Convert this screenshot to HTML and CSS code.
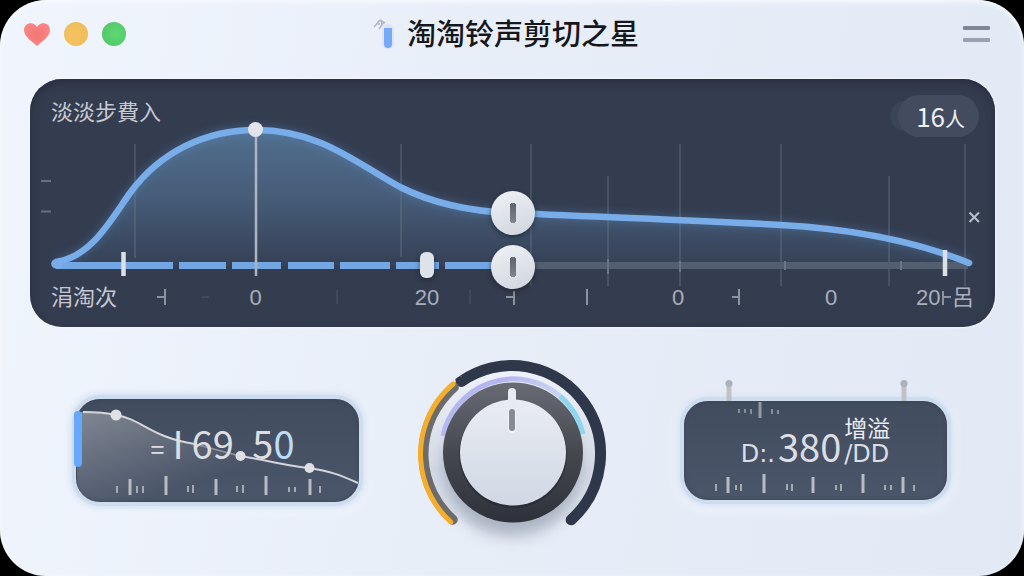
FILE: index.html
```html
<!DOCTYPE html>
<html lang="zh-CN">
<head>
    <meta charset="UTF-8">
    <meta name="viewport" content="width=device-width, initial-scale=1.0">
    <title>淘淘铃声剪切之星</title>
    <link rel="stylesheet" href="styles.css">
</head>
<body>
<div class="window">
    <header class="titlebar">
        <div class="lights">
            <button type="button" class="light" aria-label="关闭">
                <svg class="heart" viewBox="0 0 26 23">
                    <defs>
                        <radialGradient id="heartFill">
                            <stop offset="0" stop-color="#f27575"/>
                            <stop offset="1" stop-color="#fa8583"/>
                        </radialGradient>
                    </defs>
                    <path d="M13 23 C9 19 0 14 0 7 C0 -1 10 -2 13 4 C16 -2 26 -1 26 7 C26 14 17 19 13 23 Z" fill="url(#heartFill)"/>
                </svg>
            </button>
            <button type="button" class="light dot yellow" aria-label="最小化"></button>
            <button type="button" class="light dot green" aria-label="最大化"></button>
        </div>
        <div class="brand">
            <svg class="brand-icon" viewBox="0 0 22 32">
                <path d="M1 9 L7 2 L12 5 M3 6 L7 6 M6 11 L11 4 M8 2 L9 8" fill="none" stroke="#b4b8c2" stroke-width="1.5"/>
                <rect x="9" y="6" width="12" height="25" rx="5" fill="#dfe6f2"/>
                <path d="M11 10 H19 V26 A4 4 0 0 1 11 26 Z" fill="#78a9f7"/>
            </svg>
            <h1>淘淘铃声剪切之星</h1>
        </div>
        <button type="button" class="menu" aria-label="菜单"><span></span><span></span></button>
    </header>

    <main>
        <section class="panel">
            <svg class="chart" viewBox="30 79 965 248">
                <defs>
                    <linearGradient id="area" gradientUnits="userSpaceOnUse" x1="0" y1="130" x2="0" y2="266">
                        <stop offset="0" stop-color="#6fa3cf" stop-opacity=".5"/>
                        <stop offset=".5" stop-color="#6a9ac8" stop-opacity=".34"/>
                        <stop offset="1" stop-color="#6098cc" stop-opacity=".05"/>
                    </linearGradient>
                    <filter id="glow" x="-5%" y="-20%" width="110%" height="140%">
                        <feGaussianBlur stdDeviation="5"/>
                    </filter>
                </defs>

                <path d="M56 262 C92 257 112 218 130 193 C160 152 205 130 256 130 C320 130 356 163 400 187 C440 207 480 212 513 213 C620 218 690 220 781 225 C870 230 930 247 969 263 L969 266 L56 266 Z" fill="url(#area)"/>

                <!-- Raster -->
                <g stroke="#6c7788" stroke-opacity=".5" stroke-width="1.5">
                    <path d="M135 144 V258 M401 144 V257 M531 144 V286 M608 176 V286 M680 144 V286 M781 144 V286 M889 176 V286 M965 144 V286"/>
                    <path d="M41 181 H51 M41 211.500 H51" stroke-opacity=".9" stroke-width="2"/>
                </g>

                <path d="M56 262 C92 257 112 218 130 193 C160 152 205 130 256 130 C320 130 356 163 400 187 C440 207 480 212 513 213 C620 218 690 220 781 225 C870 230 930 247 969 263" fill="none" stroke="#5b97de" stroke-opacity=".35" stroke-width="7" filter="url(#glow)"/>

                <!-- Spur -->
                <path d="M513 265.500 H968" stroke="#535f70" stroke-width="7"/>
                <path d="M608 259 V274 M680 261 V272 M785 261 V270 M901 261 V270" stroke="#6a7685" stroke-width="2"/>
                <path d="M56 265.500 H173 M179 265.500 H226 M232 265.500 H281 M288 265.500 H334 M340 265.500 H390 M396 265.500 H439 M445 265.500 H513" stroke="#72a7e4" stroke-width="7"/>

                <path d="M60 265.500 H57 C53 265 54 262 58 261.500 C92 256 112 218 130 193 C160 152 205 130 256 130 C320 130 356 163 400 187 C440 207 480 212 513 213 C620 218 690 220 781 225 C870 230 930 247 969 263" fill="none" stroke="#78ade9" stroke-width="6.500" stroke-linecap="round" stroke-linejoin="round"/>

                <path d="M256 130 V276" stroke="#aeb5c1" stroke-width="2.500"/>
                <circle cx="255.500" cy="129.500" r="7.500" fill="#e2e4e9"/>
                <path d="M123.500 252 V276 M945 250 V276" stroke="#dcdfe6" stroke-width="4.500"/>

                <!-- Skala -->
                <g class="scale">
                    <text x="255.500" y="305" text-anchor="middle">0</text>
                    <text x="427" y="305" text-anchor="middle">20</text>
                    <text x="678" y="305" text-anchor="middle">0</text>
                    <text x="831" y="305" text-anchor="middle">0</text>
                    <text x="916" y="305">20</text>
                    <text class="cjk" x="952" y="305">呂</text>
                    <text class="cjk start" x="51" y="305">涓淘次</text>
                    <path d="M165 289 V305 M157 297 H165 M514 291 V305 M506 297 H514 M587 289 V305 M739 289 V305 M732 297 H739 M943 291 V305 M943 297 H951"/>
                    <path d="M202 297 H209 M337 290 V304 M470 290 V304" opacity=".15"/>
                </g>
                <path d="M969.500 212.500 L979 222 M979 212.500 L969.500 222" stroke="#b9bfca" stroke-width="2"/>
            </svg>
            <div class="panel-head">
                <h2>淡淡步費入</h2>
                <span class="badge">16<small>人</small></span>
            </div>
            <input class="handle upper" type="range" min="0" max="100" value="50" aria-label="曲线">
            <input class="handle pill" type="range" min="0" max="200" value="81" aria-label="起点">
            <input class="handle lower" type="range" min="0" max="100" value="50" aria-label="终点">
        </section>

        <section class="controls">
            <div class="card card-left">
                <svg viewBox="76 398 283 103">
                    <defs>
                        <linearGradient id="haze" x1="0" y1="0" x2="1" y2="1">
                            <stop offset="0" stop-color="#b4b7bd" stop-opacity=".55"/>
                            <stop offset=".6" stop-color="#b4b7bd" stop-opacity="0"/>
                        </linearGradient>
                    </defs>
                    <path d="M77 411 C95 411 108 412 116 414 C142 418 150 436 195 443 C250 460 280 462 309 467 C330 470 340 474 358 482 C355 495 346 501 335 501 L100 501 C86 501 77 491 77 477 Z" fill="url(#haze)"/>
                    <path d="M83 411 C95 411 108 412 116 414 C142 418 150 436 195 443 M240 455 C270 460 290 465 309 467 C330 470 340 474 358 482" fill="none" stroke="#d4d6da" stroke-width="2"/>
                    <path d="M195 443 L240 455" stroke="#d4d6da" stroke-opacity=".5" stroke-width="1.500"/>
                    <g class="ticks">
                        <path d="M117 485 V492 M137 485 V492 M143 485 V492 M188 485 V491 M193 484 V492 M237 485 V491 M243 484 V492 M289 486 V491 M295 486 V491 M320 485 V492"/>
                        <path class="big" d="M130 478 V494 M166 475 V494 M216 478 V494 M266 475 V494 M310 478 V494"/>
                    </g>
                    <rect x="74" y="410" width="8" height="56" rx="4" fill="#66a8fb"/>
                    <circle cx="116" cy="414" r="5.500" fill="#dfe1e5"/>
                    <circle cx="240.500" cy="455" r="5" fill="#dfe1e5"/>
                    <circle cx="309.500" cy="467" r="5" fill="#dfe1e5"/>
                </svg>
                <div class="readout">
                    <span class="equals">=</span><span>I</span><span>69.</span><span>5<b>0</b></span>
                </div>
            </div>

            <div class="knob">
                <svg viewBox="419 360 188 180">
                    <defs>
                        <linearGradient id="bezel" x1="0" y1="0" x2="0" y2="1">
                            <stop offset="0" stop-color="#696c74"/>
                            <stop offset=".5" stop-color="#45484f"/>
                            <stop offset="1" stop-color="#2d3139"/>
                        </linearGradient>
                        <linearGradient id="cap" x1="0" y1="0" x2="0" y2="1">
                            <stop offset="0" stop-color="#e9ecf2"/>
                            <stop offset="1" stop-color="#d0d8e4"/>
                        </linearGradient>
                        <linearGradient id="plate" x1="0" y1="0" x2="0" y2="1">
                            <stop offset="0" stop-color="#eef2f9"/>
                            <stop offset=".6" stop-color="#d3dae6"/>
                            <stop offset="1" stop-color="#e6ecf6"/>
                        </linearGradient>
                        <linearGradient id="violet">
                            <stop offset="0" stop-color="#b5b9ee"/>
                            <stop offset=".5" stop-color="#b4b4f2"/>
                            <stop offset="1" stop-color="#c9d5f1"/>
                        </linearGradient>
                        <filter id="soft" x="-30%" y="-30%" width="160%" height="160%">
                            <feGaussianBlur stdDeviation="8"/>
                        </filter>
                    </defs>
                    <circle cx="513" cy="453" r="84" fill="url(#plate)"/>
                    <ellipse cx="513" cy="470" rx="68" ry="66" fill="#7c8798" opacity=".55" filter="url(#soft)"/>
                    <!-- Bögen, Winkel in Grad -->
                    <g fill="none" stroke-linecap="round">
                        <circle cx="513" cy="454" r="88.500" pathLength="360" stroke="#2e384a" stroke-width="11" stroke-dasharray="173 187" transform="rotate(235 513 454)"/>
                        <circle cx="513" cy="454" r="88.500" pathLength="360" stroke="#6d6c6c" stroke-width="10" stroke-dasharray="97 263" transform="rotate(132 513 454)"/>
                        <circle cx="513" cy="454" r="91.500" pathLength="360" stroke="#f5ae2c" stroke-width="5" stroke-dasharray="98 262" transform="rotate(132 513 454)"/>
                    </g>
                    <path d="M444 436 A72 72 0 0 1 561 396" fill="none" stroke="url(#violet)" stroke-width="5"/>
                    <path d="M561 396 A74 74 0 0 1 584 434" fill="none" stroke="#8ed7ee" stroke-width="5"/>
                    <circle cx="514" cy="452.500" r="70" fill="url(#bezel)"/>
                    <circle cx="514" cy="454" r="54" fill="#1f242d" opacity=".5"/>
                    <circle cx="514" cy="452.500" r="53" fill="url(#cap)"/>
                    <rect x="509" y="388" width="8" height="18" rx="4" fill="#e7eaf0"/>
                    <rect x="509" y="409" width="8" height="24" rx="4" fill="#f3f5f8"/>
                    <rect x="510" y="409" width="6" height="22" rx="3" fill="#858a93"/>
                </svg>
                <input type="range" min="0" max="100" value="50" aria-label="音量">
            </div>

            <div class="card card-right">
                <svg viewBox="684 402 263 99">
                    <g class="ticks">
                        <path d="M739 410 V414 M745 410 V414 M751 410 V415 M772 410 V415 M778 411 V415" opacity=".7"/>
                        <path class="big" d="M760 403 V419" opacity=".7"/>
                        <path d="M716 485 V492 M736 486 V491 M741 485 V492 M787 485 V491 M792 485 V492 M836 486 V491 M841 485 V492 M885 486 V491 M891 486 V491 M914 486 V492"/>
                        <path class="big" d="M728 478 V494 M764 475 V494 M813 478 V494 M863 475 V494 M903 478 V494"/>
                    </g>
                    <path d="M729 384 V402 M904 384 V402" stroke="#bfc1c7" stroke-width="5"/>
                    <circle cx="729" cy="384.500" r="3.500" fill="#aeb1b8"/>
                    <circle cx="904" cy="384.500" r="3.500" fill="#aeb1b8"/>
                </svg>
                <div class="readout">
                    <span class="small">D:.</span><span>380</span>
                    <span class="unit"><em>增溢</em><span class="small">/DD</span></span>
                </div>
            </div>
        </section>
    </main>
</div>
</body>
</html>
```
FILE: styles.css
```css
* {
    box-sizing: border-box;
}
body {
    margin: 0;
    background: #000;
    font-family: "Noto Sans CJK SC", sans-serif;
}
button {
    border: none;
    padding: 0;
    background: none;
    cursor: pointer;
}
h1, h2 {
    margin: 0;
    font-weight: 400;
}
.window {
    min-height: 100vh;
    border-radius: 46px;
    background: linear-gradient(100deg, #f0f5fd 0%, #e8eef8 45%, #e1e9f5 100%);
    box-shadow: inset 0 2px 5px #f8fbff;
}

/* Titelleiste */
.titlebar {
    display: grid;
    grid-template-columns: 1fr auto 1fr;
    align-items: center;
    height: 68px;
    padding: 0 34px 0 24px;
}
.lights {
    display: flex;
    align-items: center;
    gap: 14px;
}
.light {
    width: 24px;
    height: 24px;
}
.heart {
    display: block;
    width: 26px;
    height: 23px;
}
.light:first-child {
    width: 26px;
}
.dot {
    border-radius: 50%;
}
.yellow {
    background: radial-gradient(circle at 40% 60%, #f6c260, #eebc5a);
}
.green {
    background: radial-gradient(circle at 60% 50%, #5ed873, #4fc467);
}
.brand {
    display: flex;
    align-items: center;
    gap: 12px;
    padding-right: 2px;
}
.brand-icon {
    width: 22px;
    height: 32px;
}
.brand h1 {
    padding-bottom: 4px;
    font-size: 29px;
    line-height: 40px;
    font-weight: 500;
    color: #15171c;
}
.menu {
    justify-self: end;
    display: grid;
    gap: 8px;
    width: 27px;
}
.menu span {
    height: 4px;
    border-radius: 1px;
    background: #7d8797;
}
.menu span:last-child {
    background: #98a2b3;
}

/* Kurve */
.panel {
    position: relative;
    aspect-ratio: 965 / 248;
    margin: 11px 29px 0 30px;
    border-radius: 32px;
    background: #343c4f;
    box-shadow: inset 0 3px 8px #262e3f, 0 0 3px #fff;
}
.chart {
    position: absolute;
    inset: 0;
    width: 100%;
    height: 100%;
}
.panel-head {
    position: relative;
    display: flex;
    justify-content: space-between;
    align-items: flex-start;
    padding: 16px 16px 0 21px;
}
.panel-head h2 {
    font-size: 22px;
    line-height: 30px;
    color: #c6c9d1;
}
.badge {
    padding: 0 14px 0 18px;
    border-radius: 21px;
    background: #434c5f;
    box-shadow: -14px 0 0 -6px #3b4558;
    color: #eef0f5;
    font-size: 26px;
    line-height: 42px;
}
.badge small {
    font-size: 20px;
    line-height: 20px;
}
.scale text {
    font-family: "Liberation Sans", sans-serif;
    font-size: 22px;
    fill: #a9afba;
}
.scale .cjk {
    font-family: "Noto Sans CJK SC", sans-serif;
}
.scale .start {
    fill: #c6c9d1;
}
.scale path {
    stroke: #8b92a0;
    stroke-width: 2;
}
.handle {
    position: absolute;
    left: 2.5%;
    width: 95%;
    height: 44px;
    margin: -22px 0 0;
    appearance: none;
    background: none;
    pointer-events: none;
}
.handle::-webkit-slider-thumb {
    appearance: none;
    width: 44px;
    height: 44px;
    border-radius: 50%;
    background:
        linear-gradient(#5f646e, #7d828c) center / 6px 18px no-repeat,
        linear-gradient(#6a6f79, #858a93) center / 4px 20px no-repeat,
        linear-gradient(160deg, #eff1f5, #cfd5de);
    box-shadow: 0 2px 5px rgba(20, 26, 40, 0.6);
    pointer-events: auto;
}
.upper {
    top: 54%;
}
.lower {
    top: 76%;
}
.pill {
    top: 75%;
}
.pill::-webkit-slider-thumb {
    width: 14px;
    height: 26px;
    border-radius: 6px;
    background: #dee2e9;
}

/* Unterer Bereich */
.controls {
    display: grid;
    grid-template-columns: 1fr auto 1fr;
    align-items: center;
    padding: 33px 77px 36px 76px;
}
.card {
    position: relative;
    display: flex;
    align-items: center;
    justify-content: center;
    border-radius: 24px;
    background: linear-gradient(#424c5f, #4b566a);
    box-shadow: inset 0 0 4px #3a4354, 0 0 0 4px #cddcef, 0 0 6px 6px #d3e0f1, 0 3px 8px 8px #f0f5fd;
}
.card svg {
    position: absolute;
    inset: 0;
    width: 100%;
    height: 100%;
    overflow: visible;
}
.card-left {
    width: 283px;
    height: 103px;
    padding: 0 0 10px 10px;
}
.card-right {
    justify-self: end;
    width: 263px;
    height: 99px;
    padding-bottom: 22px;
}
.ticks path {
    stroke: #a4a9b2;
    stroke-width: 2;
}
.ticks .big {
    stroke: #b7bbc2;
    stroke-width: 3;
}
.readout {
    position: relative;
    display: flex;
    align-items: baseline;
    gap: 8px;
    font-size: 38px;
    line-height: 40px;
    color: #dcdee2;
}
.readout .equals {
    font-size: 25px;
}
.readout b {
    font-weight: 400;
    color: #bcdcf6;
}
.readout .small {
    font-family: "DejaVu Sans", sans-serif;
    font-size: 24px;
    line-height: 24px;
}
.card-right .readout {
    align-items: last baseline;
    gap: 3px;
}
.unit {
    display: flex;
    flex-direction: column;
}
.unit em {
    font-style: normal;
    font-size: 23px;
    line-height: 30px;
    text-align: right;
    color: #eceef1;
}
.knob {
    position: relative;
    width: 188px;
    height: 180px;
}
.knob svg {
    display: block;
    width: 100%;
    height: 100%;
    overflow: visible;
}
.knob input {
    position: absolute;
    inset: 0;
    width: 100%;
    height: 100%;
    margin: 0;
    opacity: 0;
    cursor: pointer;
}
```
